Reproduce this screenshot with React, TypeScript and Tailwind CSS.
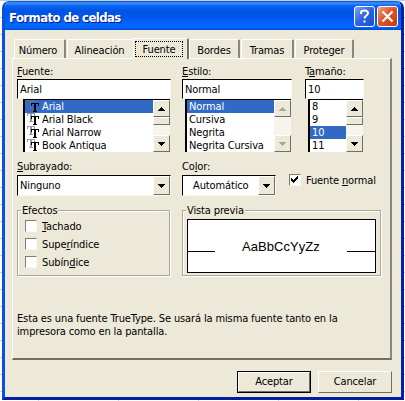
import type { ReactNode } from "react";

const FONT = "font-['DejaVu_Sans_Condensed','DejaVu_Sans',sans-serif]";

// Underlines the access key of a label
function Key({ children }: { children: string }) {
  return <span className="underline decoration-1 underline-offset-[1px]">{children}</span>;
}

function FontIcon({ active }: { active: boolean }) {
  return (
    <svg width="12" height="13" viewBox="0 0 12 13" shapeRendering="crispEdges">
      <path
        fill={active ? "#5b6f9c" : "#9a9a9a"}
        d="M0 0h8v3h-1v-2h-2v7h1v1h-4v-1h1v-7h-2v2h-1z"
      />
      <path fill="#000" d="M4 3h8v3h-1v-2h-2v7h1v1h-4v-1h1v-7h-2v2h-1z" />
    </svg>
  );
}

function Arrow({ up, color = "#000" }: { up?: boolean; color?: string }) {
  return (
    <svg width="7" height="4" viewBox="0 0 7 4" shapeRendering="crispEdges">
      <path fill={color} d={up ? "M3 0h1v1h1v1h1v1h1v1h-7v-1h1v-1h1v-1h1z" : "M0 0h7v1h-1v1h-1v1h-1v1h-1v-1h-1v-1h-1v-1h-1z"} />
    </svg>
  );
}

const RAISED =
  "bg-[#ece9d8] border border-t-white border-l-white border-r-[#716f64] border-b-[#716f64] flex items-center justify-center";

function ScrollBar({ disabled }: { disabled?: boolean }) {
  const color = disabled ? "#aca899" : "#000";
  return (
    <div className="w-[17px] shrink-0 bg-[#f6f4ec] flex flex-col">
      <div className={`${RAISED} h-[17px]`}>
        <Arrow up color={color} />
      </div>
      {!disabled && <div className={`${RAISED} h-[8px]`} />}
      <div className={`${RAISED} h-[17px] mt-auto`}>
        <Arrow color={color} />
      </div>
    </div>
  );
}

const SUNKEN = "bg-white border-t border-l border-t-black border-l-black border-r border-b border-r-[#f8f7f0] border-b-[#f8f7f0]";

interface FieldProps {
  label: ReactNode;
  value: string;
  items: string[];
  selected: number;
  width: string;
  indent: string;
  icons?: boolean;
  disabled?: boolean;
}

function ListField({ label, value, items, selected, width, indent, icons, disabled }: FieldProps) {
  return (
    <div className={width}>
      <div className="h-[13px] leading-[13px]">{label}</div>
      <div className={`${SUNKEN} mt-px h-[20px] pl-[2px] leading-[19px]`}>{value}</div>
      <div className={`${indent} mr-px h-[53px] bg-white flex border-t border-l-2 border-black`}>
        <div className="flex-1 whitespace-nowrap">
          {items.map((item, i) => (
            <div
              key={item}
              className={`h-[13px] leading-[14px] flex pl-[2px] ${i === selected ? "bg-[#316ac5] text-white" : ""}`}
            >
              {icons && (
                <span className="w-[15px] shrink-0">
                  <FontIcon active={i === selected} />
                </span>
              )}
              {item}
            </div>
          ))}
        </div>
        <ScrollBar disabled={disabled} />
      </div>
    </div>
  );
}

function Combo({ children, className }: { children: string; className: string }) {
  return (
    <div className={`${SUNKEN} h-[21px] flex ${className}`}>
      <div className="flex-1 leading-[19px]">{children}</div>
      <div className={`${RAISED} w-[17px]`}>
        <Arrow />
      </div>
    </div>
  );
}

function CheckBox({ checked, children }: { checked?: boolean; children: ReactNode }) {
  return (
    <div className="flex h-[18px]">
      <div className="size-[12px] shrink-0 bg-white border border-t-[#807d6e] border-l-[#807d6e] border-r-[#f8f7f0] border-b-[#f8f7f0]">
        {checked && (
          <svg width="10" height="10" viewBox="0 0 10 10" shapeRendering="crispEdges">
            <path d="M1 3h1v1h1v1h1v-1h1v-1h1v-1h1v-1h1v3h-1v1h-1v1h-1v1h-1v1h-1v-1h-1v-1h-1z" />
          </svg>
        )}
      </div>
      <div className="ml-[5px] leading-[13px] whitespace-nowrap">{children}</div>
    </div>
  );
}

function Group({ title, className, children }: { title: string; className: string; children: ReactNode }) {
  return (
    <fieldset className={`relative h-[66px] border border-[#aca899] shadow-[1px_1px_0_#fff,inset_1px_1px_0_#fff] ${className}`}>
      <div className="absolute -top-[7px] left-[3px] bg-[#ece9d8] px-px leading-[13px] whitespace-nowrap">{title}</div>
      {children}
    </fieldset>
  );
}

const TAB = "h-[19px] mt-px border-t border-l border-white rounded-t-[2px] leading-[21px] text-center";
const TAB_END = "border-r-2 border-r-[#8a8779]";

export default function App() {
  return (
    <div
      className={`w-[405px] h-[401px] overflow-hidden pl-[2px] pt-px text-[11px] tracking-[-0.13px] text-black bg-white bg-[linear-gradient(#c4cbe0_1px,transparent_1px),linear-gradient(90deg,#c4cbe0_1px,transparent_1px)] bg-[size:80px_17px] bg-[position:38px_0px] ${FONT}`}
    >
      <div className="w-[402px] h-[399px] rounded-t-[7px] bg-[#ece9d8] border-l-[3px] border-r-[3px] border-b-[3px] border-l-[#0b4fe0] border-r-[#0420a8] border-b-[#001f9e] overflow-hidden">
        <div className="h-[29px] -mx-[3px] pl-[7px] pr-[6px] flex items-center bg-[linear-gradient(#0a4ed0_0,#3a93ff_2px,#0a62f0_5px,#0054e3_10px,#0058ee_17px,#0067ff_23px,#0062f8_27px,#0046c8_29px)]">
          <div className="flex-1 text-white text-[13px] font-bold tracking-[-0.58px] leading-[15px] mt-[3px] [text-shadow:1px_1px_0_#0a1883]">
            Formato de celdas
          </div>
          <div className="size-[21px] mt-[2px] rounded-[3px] border border-white bg-[linear-gradient(135deg,#7ca3f5,#2f62e0_50%,#1c4fd0)]">
            <svg width="19" height="19" viewBox="0 0 19 19" fill="none" stroke="#fff" strokeWidth="2">
              <path d="M6 7V5.5C6 4 8 3.5 9.500 3.500S13 4.200 13 6.200C13 8.500 9.500 8.500 9.500 11.500M9.500 13.500V15.500" />
            </svg>
          </div>
          <div className="size-[21px] mt-[2px] ml-[2px] rounded-[3px] border border-white bg-[linear-gradient(135deg,#f0a084,#e0532c_45%,#c8380e)]">
            <svg width="19" height="19" viewBox="0 0 19 19" stroke="#fff" strokeWidth="2.200">
              <path d="M4.500 4.500L14.500 14.500M14.500 4.500L4.500 14.500" />
            </svg>
          </div>
        </div>

        <div className="pt-[8px] pl-[7px] pr-[9px]">
          <div className="flex h-[20px] pl-[2px]">
            <div className={`${TAB} ${TAB_END} w-[52px] pr-[3px]`}>Número</div>
            <div className={`${TAB} w-[66px] ml-px pr-[2px]`}>Alineación</div>
            <div className="w-[56px] h-[21px] relative border-t border-l border-white border-r-2 border-r-[#716f64] bg-[#ece9d8] rounded-t-[2px] pt-[2px] pl-px">
              <div className="w-[48px] h-[16px] border border-dotted border-black text-center leading-[15px]">Fuente</div>
            </div>
            <div className={`${TAB} ${TAB_END} w-[51px]`}>Bordes</div>
            <div className={`${TAB} ${TAB_END} w-[53px] ml-px`}>Tramas</div>
            <div className={`${TAB} ${TAB_END} w-[59px] ml-px`}>Proteger</div>
          </div>

          <div className="h-[302px] border-t border-l border-white border-r-2 border-b-2 border-r-[#8a8779] border-b-[#716f64] pt-[6px] pl-[4px]">
            <div className="flex">
              <ListField
                label={<><Key>F</Key>uente:</>}
                value="Arial"
                items={["Arial", "Arial Black", "Arial Narrow", "Book Antiqua"]}
                selected={0}
                width="w-[154px]"
                indent="ml-[6px]"
                icons
              />
              <ListField
                label={<><Key>E</Key>stilo:</>}
                value="Normal"
                items={["Normal", "Cursiva", "Negrita", "Negrita Cursiva"]}
                selected={0}
                width="w-[110px] ml-[11px]"
                indent="ml-[3px]"
                disabled
              />
              <ListField
                label={<>T<Key>a</Key>maño:</>}
                value="10"
                items={["8", "9", "10", "11"]}
                selected={2}
                width="w-[59px] ml-[13px]"
                indent="ml-[3px]"
              />
            </div>

            <div className="flex mt-[8px]">
              <div className="w-[154px]">
                <div className="h-[15px] leading-[13px]"><Key>S</Key>ubrayado:</div>
                <Combo className="pl-[2px]">Ninguno</Combo>
              </div>
              <div className="w-[94px] ml-[11px]">
                <div className="h-[15px] leading-[13px]">Co<Key>l</Key>or:</div>
                <Combo className="pl-[10px]">Automático</Combo>
              </div>
              <div className="ml-[13px] mt-[14px]">
                <CheckBox checked>Fuente <Key>n</Key>ormal</CheckBox>
              </div>
            </div>

            <div className="flex mt-[14px]">
              <Group title="Efectos" className="w-[153px] pl-[7px] pt-[9px]">
                <CheckBox><Key>T</Key>achado</CheckBox>
                <CheckBox>Supe<Key>r</Key>índice</CheckBox>
                <CheckBox>Subín<Key>d</Key>ice</CheckBox>
              </Group>
              <Group title="Vista previa" className="w-[199px] ml-[12px] pl-[4px] pt-[8px]">
                <div className="w-[189px] h-[54px] bg-white border border-black flex items-center justify-between">
                  <div className="w-[27px] h-px mt-[11px] bg-black" />
                  <div className="font-['Liberation_Sans',Arial,sans-serif] text-[13px] tracking-[0.050px] mt-px">AaBbCcYyZz</div>
                  <div className="w-[28px] h-px mt-[11px] bg-black" />
                </div>
              </Group>
            </div>

            <div className="mt-[36px] leading-[13px] whitespace-nowrap">
              Esta es una fuente TrueType. Se usará la misma fuente tanto en la
              <br />
              impresora como en la pantalla.
            </div>
          </div>

          <div className="flex justify-end gap-[7px] mt-[11px]">
            <div className="w-[74px] h-[22px] border border-black">
              <div className={`${RAISED} h-full pt-px`}>Aceptar</div>
            </div>
            <div className={`${RAISED} w-[74px] h-[22px] pt-px`}>Cancelar</div>
          </div>
        </div>
      </div>
    </div>
  );
}
